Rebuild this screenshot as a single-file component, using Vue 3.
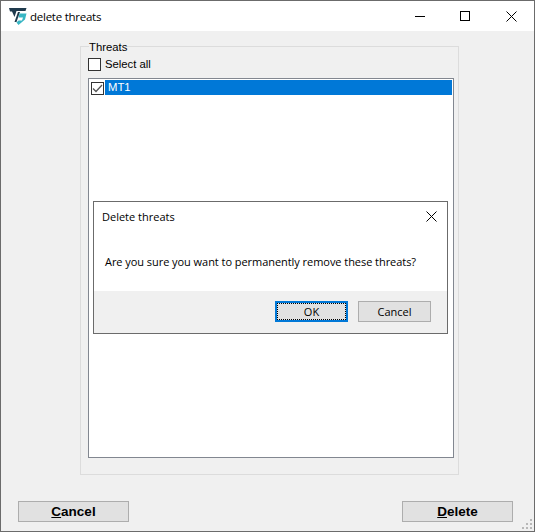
<template>
  <div class="window">
    <!-- title bar -->
    <div class="titlebar">
      <svg class="logo" width="18" height="18" viewBox="0 0 18 18">
        <path d="M0 1H17.500L16.500 4H7.500L5.500 10L3 4.500H1Z" fill="#1f3a4d" />
        <path d="M9 5L5.500 15H7.500L11 5Z" fill="#1f3a4d" />
        <path d="M10.500 6.500H17.500L16 12.500L9.500 18L7.500 15.500L9.500 13.500H13L14 10.500H9.500Z" fill="#38b6c4" />
      </svg>
      <span class="title">delete threats</span>
      <div class="controls">
        <svg width="11" height="11" viewBox="0 0 11 11" class="ctl-min"><path d="M0 5.500H10" stroke="#000" /></svg>
        <svg width="11" height="11" viewBox="0 0 11 11" class="ctl-max"><rect x="0.500" y="0.500" width="9" height="9" fill="none" stroke="#000" /></svg>
        <svg width="11" height="11" viewBox="0 0 11 11" class="ctl-close"><path d="M0.500 0.500L10.500 10.500M10.500 0.500L0.500 10.500" stroke="#000" /></svg>
      </div>
    </div>

    <!-- client area -->
    <div class="client">
      <div class="group">
        <span class="legend">Threats</span>
        <label class="select-all">
          <span class="check"></span>
          <span class="select-text">Select all</span>
        </label>
        <div class="listbox">
          <div class="row" v-for="t in threats" :key="t">
            <span class="check">
              <svg width="11" height="9" viewBox="0 0 11 9"><path d="M1 4.500L4 7.500L10 1" fill="none" stroke="#555" stroke-width="1.300" /></svg>
            </span>
            <span class="row-text">{{ t }}</span>
          </div>
        </div>
      </div>

      <div class="footer">
        <button class="big-btn"><u>C</u>ancel</button>
        <button class="big-btn"><u>D</u>elete</button>
      </div>

      <svg class="grip" width="12" height="12" viewBox="0 0 12 12" fill="#b8b8b8">
        <rect x="8" y="0" width="2" height="2" />
        <rect x="4" y="4" width="2" height="2" />
        <rect x="8" y="4" width="2" height="2" />
        <rect x="0" y="8" width="2" height="2" />
        <rect x="4" y="8" width="2" height="2" />
        <rect x="8" y="8" width="2" height="2" />
      </svg>
    </div>

    <!-- confirm dialog -->
    <div class="dialog">
      <div class="dialog-body">
        <div class="dialog-head">
          <span>Delete threats</span>
          <svg width="11" height="11" viewBox="0 0 11 11"><path d="M0.500 0.500L10.500 10.500M10.500 0.500L0.500 10.500" stroke="#000" /></svg>
        </div>
        <div class="dialog-msg">Are you sure you want to permanently remove these threats?</div>
      </div>
      <div class="dialog-foot">
        <button class="dlg-btn ok"><span>OK</span></button>
        <button class="dlg-btn">Cancel</button>
      </div>
    </div>
  </div>
</template>

<script setup>
const threats = ['MT1']
</script>

<style>
html, body {
  margin: 0;
  background: #6b6b6b;
}
</style>

<style scoped>
.window {
  position: relative;
  width: 535px;
  height: 532px;
  box-sizing: border-box;
  border: 1px solid #6b6b6b;
  display: flex;
  flex-direction: column;
  background: #f0f0f0;
  font-family: "Liberation Sans", Arial, sans-serif;
  font-size: 11.3px;
  color: #000;
}

/* title bar */
.titlebar {
  height: 30px;
  background: #fff;
  display: flex;
  align-items: center;
  padding-left: 8px;
}
.logo {
  margin-right: 3px;
}
.title {
  font-family: "Open Sans", "Noto Sans", sans-serif;
  font-size: 11.5px;
  letter-spacing: -0.25px;
}
.controls {
  margin-left: auto;
  display: flex;
  align-items: center;
}
.ctl-min { margin-right: 34px; }
.ctl-max { margin-right: 35px; }
.ctl-close { margin-right: 17px; }

/* client */
.client {
  position: relative;
  flex: 1;
  display: flex;
  flex-direction: column;
  padding: 15px 0 9px;
  box-sizing: border-box;
}
.group {
  position: relative;
  margin: 0 75px 0 79px;
  padding: 11px 4px 16px 7px;
  height: 429px;
  box-sizing: border-box;
  border: 1px solid #dcdcdc;
  display: flex;
  flex-direction: column;
}
.legend {
  position: absolute;
  left: 8px;
  top: -7px;
  line-height: 14px;
  background: #f0f0f0;
}
.select-all {
  display: flex;
  align-items: flex-start;
  gap: 4px;
  height: 14px;
}
.select-text {
  line-height: 12px;
}
.check {
  width: 11px;
  height: 11px;
  border: 1px solid #333;
  background: #fff;
  display: flex;
  align-items: center;
  justify-content: center;
  flex-shrink: 0;
}
.listbox {
  margin-top: 6px;
  flex: 1;
  border: 1px solid #828790;
  background: #fff;
  padding: 1px;
}
.row {
  display: flex;
  align-items: center;
  height: 15px;
  padding-left: 1px;
}
.row .check {
  margin-right: 1px;
  margin-top: 1px;
}
.row-text {
  flex: 1;
  height: 15px;
  line-height: 15px;
  background: #0078d7;
  color: #fff;
  padding-left: 3px;
}

/* bottom buttons */
.footer {
  margin-top: auto;
  display: flex;
  justify-content: space-between;
  padding: 0 21px 0 17px;
}
.big-btn {
  width: 111px;
  height: 21px;
  padding: 0 0 1px;
  border: 1px solid #adadad;
  background: #e1e1e1;
  font-family: "Liberation Sans", Arial, sans-serif;
  font-size: 13.5px;
  font-weight: bold;
  color: #000;
}
.grip {
  position: absolute;
  right: 0;
  bottom: 0;
}

/* dialog */
.dialog {
  position: absolute;
  left: 92px;
  top: 200px;
  width: 355px;
  height: 133px;
  box-sizing: border-box;
  border: 1px solid #6b6b6b;
  background: #f0f0f0;
  display: flex;
  flex-direction: column;
}
.dialog-body {
  height: 89px;
  background: #fff;
  font-family: "Open Sans", "Noto Sans", sans-serif;
  font-size: 11px;
}
.dialog-head {
  display: flex;
  justify-content: space-between;
  align-items: center;
  padding: 6px 10px 0 8px;
  height: 16px;
}
.dialog-msg {
  margin-top: 30px;
  padding-left: 11px;
  white-space: nowrap;
  letter-spacing: -0.05px;
}
.dialog-foot {
  flex: 1;
  display: flex;
  justify-content: flex-end;
  gap: 10px;
  padding: 10px 16px 0 0;
}
.dlg-btn {
  width: 73px;
  height: 21px;
  padding: 0;
  border: 1px solid #adadad;
  background: #e1e1e1;
  font-family: "Open Sans", "Noto Sans", sans-serif;
  font-size: 11px;
  color: #000;
}
.dlg-btn.ok {
  border: 2px solid #0078d7;
  display: flex;
  align-items: center;
  justify-content: center;
}
.dlg-btn.ok span {
  width: 100%;
  height: 100%;
  box-sizing: border-box;
  border: 1px dotted #000;
  line-height: 15px;
}
</style>
